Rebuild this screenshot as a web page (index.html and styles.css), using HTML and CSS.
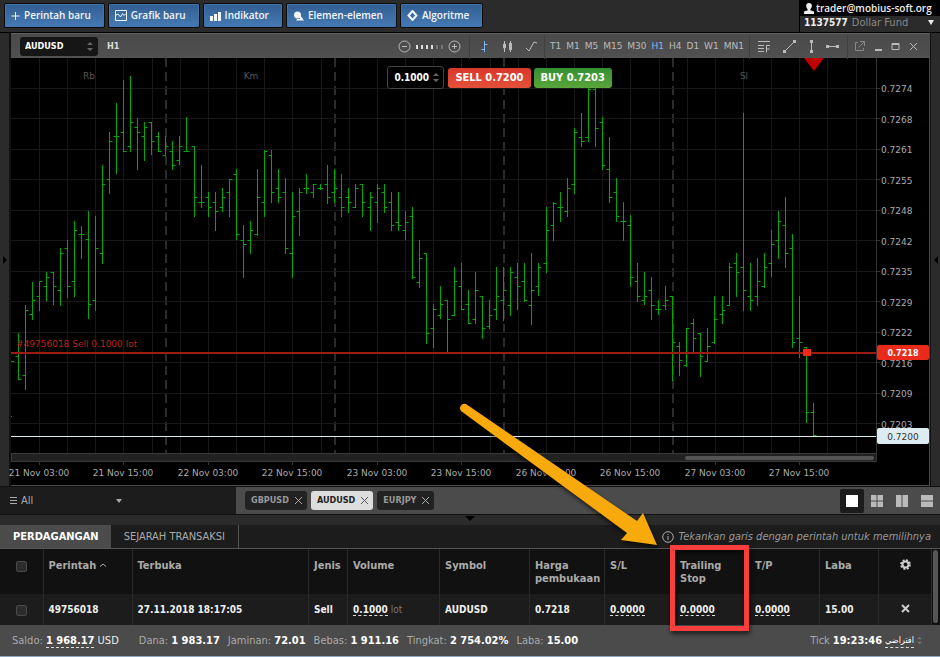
FILE: index.html
```html
<!DOCTYPE html>
<html lang="id">
<head>
    <meta charset="UTF-8">
    <meta name="viewport" content="width=device-width, initial-scale=1.0">
    <title>AUDUSD H1</title>
    <link rel="stylesheet" href="styles.css">
</head>
<body>
    <header class="topbar">
        <nav class="menu">
            <button class="menu-btn"><svg width="9" height="11" viewBox="0 0 9 11"><path d="M4.500 2v8M.5 6h8" /></svg>Perintah baru</button>
            <button class="menu-btn"><svg width="12" height="11" viewBox="0 0 12 11"><path d="M.5.5h11v10H.5zM1 5l2-1 2.500 3L7.500 3.500 9 5.500 11 3.500" /></svg>Grafik baru</button>
            <button class="menu-btn"><svg width="11" height="11" viewBox="0 0 11 11"><path class="solid" d="M0 6h3v5H0zM4 4h3v7H4zM8 2h3v9H8z" /></svg>Indikator</button>
            <button class="menu-btn"><svg width="11" height="11" viewBox="0 0 11 11"><circle class="solid" cx="4.500" cy="5" r="3.500" /><path class="solid" d="M7 5l4 5.500H3L4 9h3z" /></svg>Elemen-elemen</button>
            <button class="menu-btn"><svg width="11" height="11" viewBox="0 0 11 11"><path class="thick" d="M5.500 1l4 4.500-4 4.500-4-4.500z" /></svg>Algoritme</button>
        </nav>
        <div class="account">
            <div class="account-user">
                <svg width="10" height="11" viewBox="0 0 10 11"><path d="M5 0a2.800 2.800 0 0 1 2.800 3C7.800 4.500 7 6 6.300 6.300v1L10 8.500V11H0V8.500l3.700-1.200v-1C3 6 2.200 4.500 2.200 3A2.800 2.800 0 0 1 5 0z" /></svg>
                trader@mobius-soft.org
            </div>
            <div class="account-fund"><b>1137577</b> <span>Dollar Fund</span><i class="caret"></i></div>
        </div>
    </header>

    <main class="workspace">
        <div class="handle"><svg width="6" height="8" viewBox="0 0 6 8"><path d="M1 0l4 4-4 4z" /></svg></div>
        <section class="chart-window">
            <div class="toolbar">
                <div class="symbol-box">
                    <select class="symbol" aria-label="Symbol"><option>AUDUSD</option></select>
                    <svg class="spin" width="6" height="11" viewBox="0 0 6 11"><path d="M0 4l3-3 3 3zM0 7l3 3 3-3z" /></svg>
                </div>
                <b class="period">H1</b>
                <div class="tools zoom-tools">
                    <button class="tool" aria-label="Zoom out"><svg width="13" height="13" viewBox="0 0 13 13"><circle cx="6.500" cy="6.500" r="5.500" /><path d="M4 6.500h5" /></svg></button>
                    <span class="steps"><i></i><i></i><i></i><i></i><i class="off"></i><i class="off"></i></span>
                    <button class="tool" aria-label="Zoom in"><svg width="13" height="13" viewBox="0 0 13 13"><circle cx="6.500" cy="6.500" r="5.500" /><path d="M4 6.500h5M6.500 4v5" /></svg></button>
                </div>
                <div class="tools type-tools">
                    <button class="tool active" aria-label="Bars"><svg width="11" height="13" viewBox="0 0 11 13"><path d="M5.500 1v11M2.500 9.500h3M5.500 4.500h3" /></svg></button>
                    <button class="tool" aria-label="Candles"><svg width="11" height="13" viewBox="0 0 11 13"><path d="M2.500 1v11M8.500 1v11M1.500 4h2v4h-2z" /><path class="solid" d="M7 3h3v7H7z" /></svg></button>
                    <button class="tool" aria-label="Line"><svg width="13" height="13" viewBox="0 0 13 13"><path d="M1 8l3 3 5-9 3 1" /></svg></button>
                </div>
                <div class="tools frames">
                    <button>T1</button><button>M1</button><button>M5</button><button>M15</button><button>M30</button><button class="active">H1</button><button>H4</button><button>D1</button><button>W1</button><button>MN1</button>
                </div>
                <div class="tools draw-tools">
                    <button class="tool" aria-label="Fibonacci"><svg width="13" height="13" viewBox="0 0 13 13"><path d="M0 1.500h12M0 5.500h6M0 8.500h6M0 11.500h6M8.500 12.500v-7H12M8.500 9h3" /></svg></button>
                    <button class="tool" aria-label="Trend line"><svg width="13" height="13" viewBox="0 0 13 13"><path d="M2 11l9-9" /><path class="solid" d="M0 10h3v3H0zM10 0h3v3h-3z" /></svg></button>
                    <button class="tool" aria-label="Vertical line"><svg width="5" height="13" viewBox="0 0 5 13"><path d="M2.500 1v11" /><path class="solid" d="M1 0h3v3H1zM1 10h3v3H1z" /></svg></button>
                    <button class="tool" aria-label="Horizontal line"><svg width="13" height="5" viewBox="0 0 13 5"><path d="M1 2.500h11" /><path class="solid" d="M0 1h3v3H0zM10 1h3v3h-3z" /></svg></button>
                </div>
                <div class="tools window-tools">
                    <button class="tool dim" aria-label="Detach"><svg width="11" height="11" viewBox="0 0 11 11"><path d="M4 1.500H1.500v8h8V7M6 .5h4.500V5M10.500.5L4.500 6.500" /></svg></button>
                    <button class="tool" aria-label="Minimize"><svg width="9" height="11" viewBox="0 0 9 11"><path class="thick" d="M1 9h7" /></svg></button>
                    <button class="tool" aria-label="Maximize"><svg width="9" height="11" viewBox="0 0 9 11"><path d="M1 2.500h7v6H1zM1 3.500h7" /></svg></button>
                    <button class="tool" aria-label="Close"><svg width="9" height="11" viewBox="0 0 9 11"><path d="M1 2l7 7M8 2l-7 7" /></svg></button>
                </div>
            </div>
            <div class="chart-area">
                <svg class="chart" id="chart" viewBox="11 58 918 427">
                    <g id="grid"></g>
                    <g id="bars"></g>
                    <path class="order-line" d="M11 353h865" />
                    <text class="order-text" x="16" y="347">#49756018 Sell 0.1000 lot</text>
                    <path class="bid-line" d="M11 436.500h865" />
                    <rect class="order-dot" x="803" y="349" width="8" height="7" />
                    <path class="marker" d="M804 58h20l-10 13z" />
                    <rect class="scroll-track" x="11.500" y="453.500" width="865" height="8" />
                    <rect class="scroll-thumb" x="685" y="456" width="189" height="4" rx="2" />
                    <path class="axis" d="M876.500 58v403.500" />
                    <g id="labels"></g>
                    <rect class="order-tag" x="877" y="345" width="52" height="15" rx="2" />
                    <text class="tag-text" x="903" y="356">0.7218</text>
                    <rect class="bid-tag" x="877" y="428" width="52" height="16" rx="2" />
                    <text class="tag-text bid" x="903" y="440">0.7200</text>
                </svg>
                <form class="order-form">
                    <div class="lot-box">
                        <input class="lot" type="text" value="0.1000" aria-label="Volume">
                        <svg class="spin" width="6" height="11" viewBox="0 0 6 11"><path d="M0 4l3-3 3 3zM0 7l3 3 3-3z" /></svg>
                    </div>
                    <button type="button" class="sell">SELL 0.7200</button>
                    <button type="button" class="buy">BUY 0.7203</button>
                </form>
            </div>
        </section>
        <div class="handle right"><svg width="6" height="8" viewBox="0 0 6 8"><path d="M5 0L1 4l4 4z" /></svg></div>
    </main>

    <section class="charts-bar">
        <div class="watchlist">
            <svg width="7" height="9" viewBox="0 0 7 9"><path d="M0 1.500h7M0 4.500h7M0 7.500h7" /></svg>
            <select aria-label="Watchlist"><option>All</option></select>
            <i class="caret"></i>
        </div>
        <div class="chips">
            <button class="chip">GBPUSD<svg width="7" height="7" viewBox="0 0 7 7"><path d="M0 0l7 7M7 0L0 7" /></svg></button>
            <button class="chip active">AUDUSD<svg width="7" height="7" viewBox="0 0 7 7"><path d="M0 0l7 7M7 0L0 7" /></svg></button>
            <button class="chip">EURJPY<svg width="7" height="7" viewBox="0 0 7 7"><path d="M0 0l7 7M7 0L0 7" /></svg></button>
        </div>
        <div class="layouts">
            <button class="layout active" aria-label="One chart"><svg width="12" height="12" viewBox="0 0 12 12"><path d="M0 0h12v12H0z" /></svg></button>
            <button class="layout" aria-label="Four charts"><svg width="12" height="12" viewBox="0 0 12 12"><path d="M0 0h5.500v5.500H0zM6.500 0H12v5.500H6.500zM0 6.500h5.500V12H0zM6.500 6.500H12V12H6.500z" /></svg></button>
            <button class="layout" aria-label="Two columns"><svg width="12" height="12" viewBox="0 0 12 12"><path d="M0 0h5.500v12H0zM6.500 0H12v12H6.500z" /></svg></button>
            <button class="layout" aria-label="Two rows"><svg width="12" height="12" viewBox="0 0 12 12"><path d="M0 0h12v5.500H0zM0 6.500h12V12H0z" /></svg></button>
        </div>
    </section>

    <div class="splitter"><svg width="10" height="5" viewBox="0 0 10 5"><path d="M0 0h10L5 5z" /></svg></div>

    <section class="orders">
        <div class="tabs">
            <button class="tab active">PERDAGANGAN</button>
            <button class="tab">SEJARAH TRANSAKSI</button>
            <p class="hint"><svg width="12" height="12" viewBox="0 0 12 12"><circle cx="6" cy="6" r="5.300" /><path d="M6 5v4M6 3v1" /></svg><em>Tekankan garis dengan perintah untuk memilihnya</em></p>
        </div>
        <div class="table-wrap">
            <table>
                <colgroup>
                    <col class="c-check"><col class="c-id"><col><col class="c-type"><col class="c-volume"><col class="c-symbol"><col class="c-stop"><col class="c-sl"><col class="c-stop"><col class="c-sl"><col class="c-profit"><col class="c-action">
                </colgroup>
                <thead>
                    <tr>
                        <th class="center"><input type="checkbox" aria-label="Pilih semua"></th>
                        <th>Perintah <svg width="6" height="6" viewBox="0 0 6 6"><path d="M0 3.500L3 1l3 2.500" /></svg></th>
                        <th>Terbuka</th>
                        <th>Jenis</th>
                        <th>Volume</th>
                        <th>Symbol</th>
                        <th>Harga<br>pembukaan</th>
                        <th class="plain">S/L</th>
                        <th class="plain">Trailing<br>Stop</th>
                        <th>T/P</th>
                        <th>Laba</th>
                        <th class="center"><button class="icon-btn" aria-label="Kolom"><svg width="11" height="11" viewBox="-5.500 -5.500 11 11"><circle class="gear" r="4.400" /><circle class="ring" r="3" /><circle class="hub" r="1" /></svg></button></th>
                    </tr>
                </thead>
                <tbody>
                    <tr>
                        <td class="center"><input type="checkbox" aria-label="Pilih 49756018"></td>
                        <td>49756018</td>
                        <td>27.11.2018 18:17:05</td>
                        <td>Sell</td>
                        <td><a href="#">0.1000</a> <span class="unit">lot</span></td>
                        <td>AUDUSD</td>
                        <td>0.7218</td>
                        <td class="plain"><a href="#">0.0000</a></td>
                        <td class="plain"><a href="#">0.0000</a></td>
                        <td><a href="#">0.0000</a></td>
                        <td>15.00</td>
                        <td class="center"><button class="icon-btn" aria-label="Tutup"><svg width="9" height="9" viewBox="0 0 9 9"><path class="cross" d="M1 1l7 7M8 1L1 8" /></svg></button></td>
                    </tr>
                </tbody>
            </table>
            <div class="scrollbar"></div>
        </div>
    </section>

    <footer class="status">
        <span class="balance">Saldo: <a href="#">1 968.17</a> <strong>USD</strong></span>
        <span>Dana: <b>1 983.17</b></span>
        <span>Jaminan: <b>72.01</b></span>
        <span>Bebas: <b>1 911.16</b></span>
        <span>Tingkat: <b>2 754.02%</b></span>
        <span>Laba: <b>15.00</b></span>
        <span class="clock">Tick <b>19:23:46</b> <a href="#" class="theme" lang="ar">افتراضي</a> <svg width="5" height="9" viewBox="0 0 6 11"><path d="M0 4l3-3 3 3zM0 7l3 3 3-3z" /></svg></span>
    </footer>

    <svg class="callout" width="320" height="260" viewBox="440 390 320 260">
        <path class="arrow" d="M466 404L637 521l6-8 14 32-36-5 6-7L461 411a4.500 4.500 0 0 1 5-7z" />
        <rect x="672.500" y="547.500" width="74" height="81" />
    </svg>

    <script src="chart.js"></script>
</body>
</html>
```
FILE: styles.css
```css
* {
    box-sizing: border-box;
}

body {
    margin: 0;
    position: relative;
    background-color: #1c1c1c;
    color: #eee;
    font-family: "DejaVu Sans Condensed", "DejaVu Sans", Verdana, sans-serif;
    font-size: 10px;
    line-height: 13px;
}

button,
input,
select {
    font: inherit;
    color: inherit;
    margin: 0;
    padding: 0;
    border: none;
    background: none;
    appearance: none;
}

button {
    cursor: pointer;
}

svg {
    display: block;
    flex: none;
}

a {
    color: inherit;
    text-decoration: none;
    border-bottom: 1px dashed #ddd;
}

.caret {
    border: 3px solid transparent;
    border-top: 4px solid #aaa;
    border-bottom: 0;
}

/* top bar */
.topbar {
    display: flex;
    justify-content: space-between;
    height: 33px;
    background-color: #2b2b2b;
    border-bottom: 1px solid #000;
}

.menu {
    display: flex;
    gap: 3px;
    padding: 3px 4px;
}

.menu-btn {
    display: flex;
    align-items: center;
    gap: 4px;
    height: 25px;
    padding: 0 13px 0 6px;
    border: 1px solid #0b0b0b;
    border-radius: 2px;
    background: linear-gradient(#315e92, #467ab4);
    box-shadow: inset 0 0 0 1px #3f74ad;
    color: #f2f5f9;
    font-family: "Open Sans", sans-serif;
    font-weight: 600;
}

.menu-btn svg,
.tool svg {
    fill: none;
    stroke: currentColor;
}

.solid {
    fill: currentColor;
    stroke: none;
}

.thick {
    stroke-width: 2;
}

.account {
    width: 141px;
    border-left: 1px solid #000;
    white-space: nowrap;
}

.account-user {
    display: flex;
    align-items: center;
    gap: 2px;
    height: 16px;
    padding-left: 4px;
    background-color: #000;
    font-family: "Open Sans", sans-serif;
    font-weight: 600;
}

.account-user svg {
    fill: #eee;
}

.account-fund {
    display: flex;
    align-items: center;
    gap: 4px;
    height: 13px;
    padding: 0 6px 0 4px;
    color: #888;
}

.account-fund span {
    font-size: 11px;
}

.account-fund b {
    color: #eee;
}

.account-fund .caret {
    margin-left: auto;
    border-top: 5px solid #eee;
}

/* chart window */
.workspace {
    display: flex;
}

.handle {
    display: flex;
    align-items: center;
    width: 11px;
    padding-left: 2px;
    background-color: #2b2b2b;
    border-right: 2px solid #111;
}

.handle.right {
    width: 10px;
    border-right: 0;
    border-left: 1px solid #111;
}

.handle svg {
    fill: #000;
}

.chart-window {
    flex: 1;
    min-width: 0;
    background-color: #000;
    border-bottom: 1px solid #4a4a4a;
}

.toolbar {
    display: flex;
    align-items: center;
    height: 25px;
    padding: 1px 9px 0 9px;
    background: linear-gradient(#4a4a4a, #505050);
    border-top: 1px solid #606060;
    color: #bbb;
}

.symbol-box,
.lot-box {
    display: flex;
    align-items: center;
}

.symbol-box {
    width: 78px;
    height: 19px;
    padding: 0 5px;
    border-radius: 3px;
    background-color: #161616;
    color: #fff;
    font-size: 9px;
    font-weight: bold;
}

.symbol,
.lot {
    flex: 1;
    min-width: 0;
}

.spin {
    fill: #666;
}

.period {
    margin-left: 9px;
    color: #ddd;
    font-size: 9px;
}

.tools {
    display: flex;
    align-items: center;
    justify-content: space-between;
    height: 24px;
    border-left: 1px solid #404040;
    padding: 0 8px;
}

.zoom-tools {
    width: 79px;
    margin-left: auto;
    border-left: 0;
}

.type-tools {
    width: 75px;
    padding: 0 6px 0 9px;
}

.frames {
    width: 205px;
    padding: 0 5px;
    font-family: "DejaVu Sans", Verdana, sans-serif;
    font-size: 9px;
}

.frames .active,
.tool.active {
    color: #7fb5ee;
}

.tool.dim {
    color: #888;
}

.draw-tools {
    width: 98px;
}

.window-tools {
    width: 74px;
    padding: 0 3px 0 6px;
}

.steps {
    display: flex;
    gap: 3px;
}

.steps i {
    width: 2px;
    height: 4px;
    background-color: #ddd;
}

.steps .off {
    background-color: #777;
}

.chart-area {
    position: relative;
    border-right: 1px solid #444;
}

.chart {
    width: 100%;
    overflow: visible;
    font-family: "DejaVu Sans", Verdana, sans-serif;
    font-size: 9px;
}

.grid-line {
    stroke: #181818;
    stroke-width: 1;
}

.day-line {
    stroke: #2c2c2c;
    stroke-width: 2;
    stroke-dasharray: 9 5;
}

.bar {
    fill: none;
    stroke: #00a800;
}

.axis {
    stroke: #333;
}

.axis-text {
    fill: #aaa;
}

.day-text {
    fill: #5a5a5a;
}

.order-line {
    stroke: #9c1d10;
    stroke-width: 2;
}

.order-text {
    fill: #b8261a;
}

.order-dot,
.order-tag {
    fill: #ea2b1b;
}

.bid-line {
    stroke: #dcecee;
}

.bid-tag {
    fill: #dcecf0;
}

.marker {
    fill: #c00000;
}

.tag-text {
    fill: #fff;
    font-family: "DejaVu Sans Condensed", Verdana, sans-serif;
    font-weight: bold;
    text-anchor: middle;
}

.tag-text.bid {
    fill: #333;
    font-family: "DejaVu Sans", Verdana, sans-serif;
    font-weight: normal;
}

.scroll-track {
    fill: #222;
    stroke: #3a3a3a;
}

.scroll-thumb {
    fill: #555;
}

.order-form {
    position: absolute;
    top: 8px;
    left: 41%;
    display: flex;
    align-items: center;
    gap: 3px;
    font-weight: bold;
}

.lot-box {
    width: 57px;
    height: 23px;
    padding: 0 4px 0 6px;
    border: 1px solid #444;
    border-radius: 3px;
    background-color: #000;
    color: #fff;
}

.sell,
.buy {
    height: 20px;
    padding: 0 7px;
    border-radius: 3px;
    color: #fff;
    font-size: 11px;
}

.sell {
    margin-left: 1px;
    background: linear-gradient(#d8372b, #e3513a);
}

.buy {
    background: linear-gradient(#349032, #5aa53b);
}

/* open charts */
.charts-bar {
    display: flex;
    align-items: center;
    height: 29px;
    background-color: #4b4b4b;
    border-top: 1px solid #111;
    border-bottom: 1px solid #111;
}

.watchlist {
    display: flex;
    align-items: center;
    gap: 4px;
    width: 236px;
    height: 100%;
    padding-left: 10px;
    background-color: #1c1c1c;
    color: #aaa;
    font-size: 11px;
}

.watchlist svg {
    stroke: #aaa;
}

.watchlist select {
    width: 91px;
}

.chips {
    display: flex;
    gap: 4px;
    margin-left: 9px;
}

.chip {
    display: flex;
    align-items: center;
    gap: 6px;
    height: 19px;
    padding: 0 5px 0 6px;
    border-radius: 3px;
    background-color: #222;
    color: #999;
    font-size: 9px;
    font-weight: bold;
}

.chip svg {
    stroke: #aaa;
}

.chip.active {
    background-color: #ddd;
    color: #222;
}

.chip.active svg {
    stroke: #555;
}

.layouts {
    display: flex;
    margin-left: auto;
    gap: 1px;
    padding-right: 1px;
}

.layout {
    display: grid;
    place-items: center;
    width: 24px;
    height: 24px;
    border-radius: 2px;
    fill: #bbb;
}

.layout.active {
    background-color: #1c1c1c;
    fill: #fff;
}

.splitter {
    display: flex;
    justify-content: center;
    height: 10px;
    padding-top: 1px;
    background-color: #2b2b2b;
}

/* orders */
.tabs {
    display: flex;
    height: 24px;
    border-bottom: 1px solid #555;
    font-size: 11px;
}

.tab {
    padding: 0 13px;
    color: #aaa;
    border-right: 1px solid #555;
}

.tab.active {
    padding-right: 12px;
    background-color: #4b4b4b;
    border-right: 0;
    color: #fff;
    font-weight: bold;
}

.hint {
    display: flex;
    align-items: center;
    gap: 5px;
    margin: 0 9px 0 auto;
    color: #999;
}

.hint svg {
    fill: none;
    stroke: #aaa;
}

.table-wrap {
    display: flex;
    background-color: #111;
}

.scrollbar {
    width: 5px;
    margin: 1px 2px 2px 1px;
    border-radius: 3px;
    background-color: #555;
}

table {
    flex: 1;
    table-layout: fixed;
    border-collapse: collapse;
}

.c-check {
    width: 43px;
}

.c-id {
    width: 89px;
}

.c-type {
    width: 39px;
}

.c-volume {
    width: 92px;
}

.c-symbol {
    width: 90px;
}

.c-stop {
    width: 75px;
}

.c-sl {
    width: 70px;
}

.c-profit {
    width: 59px;
}

.c-action {
    width: 53px;
}

th,
td {
    padding: 0 0 0 5px;
    border-right: 1px solid #2a2a2a;
    text-align: left;
    font-weight: bold;
}

th {
    height: 45px;
    padding-top: 10px;
    vertical-align: top;
    color: #aaa;
    font-size: 11px;
}

td {
    height: 31px;
    background-color: #1c1c1c;
}

th svg {
    display: inline-block;
    fill: none;
    stroke: #aaa;
}

.center {
    padding-left: 0;
    text-align: center;
}

.plain {
    border-right-color: transparent;
}

.unit {
    color: #777;
    font-weight: normal;
}

input[type="checkbox"] {
    width: 11px;
    height: 11px;
    border: 1px solid #4a4a4a;
    border-radius: 2px;
    background-color: #2c2c2c;
    vertical-align: middle;
}

.icon-btn svg {
    display: block;
}

.gear {
    stroke: #ccc;
    stroke-width: 2;
    stroke-dasharray: 2 1.450;
}

.ring {
    stroke: #ccc;
    stroke-width: 2;
}

.hub {
    stroke: none;
}

.cross {
    stroke: #ccc;
    stroke-width: 2;
}

/* status bar */
.status {
    display: flex;
    align-items: center;
    gap: 8px;
    height: 32px;
    padding: 0 18px 0 12px;
    background-color: #4b4b4b;
    border-bottom: 1px solid #8fa6bd;
    color: #aaa;
    font-size: 11px;
    white-space: nowrap;
}

.status b,
.status a {
    color: #fff;
    font-weight: bold;
}

.status strong {
    color: #eee;
    font-weight: normal;
}

.balance {
    margin-right: 12px;
}

.clock {
    display: flex;
    align-items: center;
    gap: 3px;
    margin-left: auto;
}

.clock svg {
    fill: #777;
}

.status .theme {
    font-size: 9px;
    font-weight: normal;
}

.callout {
    position: absolute;
    top: 390px;
    left: 440px;
    pointer-events: none;
    fill: none;
    stroke: #f93e3e;
    stroke-width: 5;
    filter: drop-shadow(1px 3px 2px rgba(0, 0, 0, 0.6));
}

.arrow {
    fill: #f8a90c;
    stroke: none;
}
```
FILE: chart.js
```js
// high, low, open, close of every hour, as y positions on the chart
const bars = [
    [333,379,356,379],[305,389,375,310],[282,319,314,300],[281,310,296,281],[272,300,286,277],[272,304,272,286],
    [248,305,290,253],[240,297,248,286],[221,296,281,230],[226,258,234,234],[211,318,239,304],[216,310,300,248],
    [165,263,253,184],[132,193,179,141],[103,173,136,136],[80,151,132,151],[76,151,146,122],[118,169,127,132],
    [122,160,136,127],[122,154,122,141],[132,151,136,151],[136,155,155,146],[141,169,151,165],[136,164,160,146],
    [117,151,151,151],[146,216,146,197],[165,207,202,202],[192,216,197,207],[192,230,202,211],[188,211,207,197],
    [179,216,192,179],[169,239,174,234],[225,277,240,244],[221,253,240,230],[169,235,234,197],[150,216,202,151],
    [150,202,155,192],[169,202,188,197],[178,253,192,248],[192,277,253,216],[188,235,211,192],[174,193,188,188],
    [184,197,192,184],[184,189,188,188],[165,203,184,197],[169,202,192,188],[174,216,197,207],[188,212,197,202],
    [184,207,207,188],[184,216,184,202],[192,230,207,197],[184,222,202,188],[184,212,192,207],[192,230,202,225],
    [192,230,222,225],[211,239,230,222],[207,278,216,277],[240,287,282,258],[253,343,253,333],[304,347,328,309],
    [286,318,315,304],[300,351,300,319],[267,315,315,281],[263,309,286,309],[290,323,304,323],[272,323,319,290],
    [296,338,296,328],[300,328,326,315],[267,319,309,296],[267,320,300,290],[267,315,305,272],[263,309,277,286],
    [263,301,281,300],[253,324,305,290],[263,295,286,267],[207,272,263,230],[202,240,225,203],[192,221,207,207],
    [178,216,211,188],[128,193,184,132],[113,146,137,141],[84,141,137,89],[84,146,89,128],[117,169,122,165],
    [137,202,169,197],[178,221,192,216],[202,240,221,221],[215,286,225,277],[263,301,281,296],[272,304,300,296],
    [277,319,290,305],[300,314,309,309],[286,309,305,300],[296,380,296,342],[342,375,346,360],[328,366,365,328],
    [319,351,323,338],[333,376,333,356],[328,361,361,346],[296,343,342,319],[296,323,314,310],[263,305,305,267],
    [253,296,263,272],[113,310,267,290],[263,310,296,300],[258,305,296,281],[253,287,286,267],[230,276,263,244],
    [211,258,240,221],[197,267,225,253],[234,347,248,342],[296,357,338,342],[347,422,347,412],[403,436,412,435]
];
const prices = ['0.7274', '0.7268', '0.7261', '0.7255', '0.7248', '0.7242', '0.7235', '0.7229', '0.7222', '0.7216', '0.7209', '0.7203'];
const times = ['21 Nov 03:00', '21 Nov 15:00', '22 Nov 03:00', '22 Nov 15:00', '23 Nov 03:00', '23 Nov 15:00', '26 Nov 03:00', '26 Nov 15:00', '27 Nov 03:00', '27 Nov 15:00'];
const days = [['Rb', 89], ['Km', 251], ['Sl', 744]];

const step = 7.04;
const crisp = n => Math.round(n) + 0.5;
const add = (id, html) => document.getElementById(id).insertAdjacentHTML('beforeend', html);

for (let x = 39; x < 876; x += step * 4) {
    add('grid', `<path class="grid-line" d="M${crisp(x)} 58V453" />`);
}
for (let x = 166; x < 700; x += step * 24) {
    add('grid', `<path class="day-line" d="M${Math.round(x)} 58V453" />`);
}

prices.forEach((price, i) => {
    const y = 88 + i * 30.5;
    add('grid', `<path class="grid-line" d="M11 ${crisp(y - 0.5)}H876" />`);
    add('labels', `<path class="axis" d="M877 ${crisp(y - 0.5)}h3" /><text class="axis-text" x="881" y="${Math.round(y) + 4}">${price}</text>`);
});

times.forEach((time, i) => {
    const x = 39 + i * step * 12;
    add('labels', `<path class="axis" d="M${crisp(x)} 462v3" /><text class="axis-text" x="${Math.round(x)}" y="476" text-anchor="middle">${time}</text>`);
});

days.forEach(([day, x]) => {
    add('labels', `<text class="day-text" x="${x}" y="79" text-anchor="middle">${day}</text>`);
});

bars.forEach(([high, low, open, close], i) => {
    const x = Math.floor(18 + i * step) + 0.5;
    add('bars', `<path class="bar" d="M${x} ${high}V${low + 1}M${x - 3} ${open + 0.5}h3M${x} ${close + 0.5}h3" />`);
});
add('bars', '<path class="bar" d="M11 361.500h3M11 416.500h1" />');
```
